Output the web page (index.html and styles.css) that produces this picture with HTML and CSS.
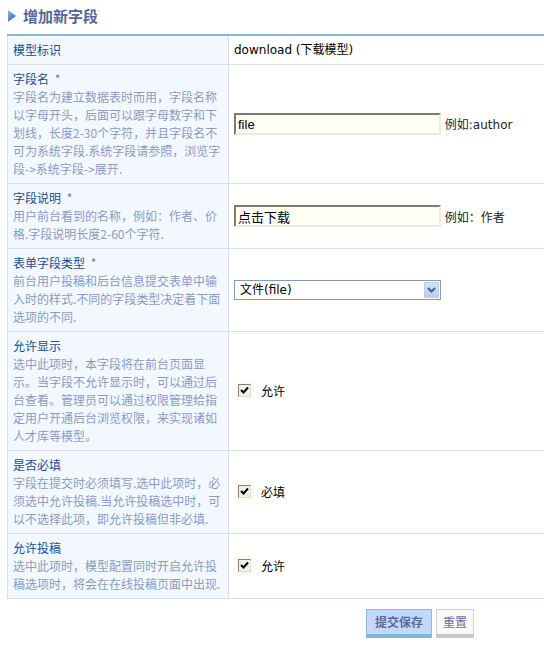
FILE: index.html
```html
<!DOCTYPE html>
<html lang="zh-CN">
<head>
<meta charset="utf-8">
<title>增加新字段</title>
<link rel="stylesheet" href="styles.css">
</head>
<body>
<div class="title">
  <svg class="tri" width="8" height="12" viewBox="0 0 8 12">
    <defs>
      <linearGradient id="tg" x1="0" y1="0" x2="1" y2="1">
        <stop offset="0" stop-color="#8fb6f0"/>
        <stop offset="1" stop-color="#1d58c2"/>
      </linearGradient>
    </defs>
    <polygon points="0,0 8,6 0,12" fill="url(#tg)"/>
  </svg>
  <h2 class="title-text">增加新字段</h2>
</div>

<table class="form">
  <tr>
    <td class="lbl"><span class="name">模型标识</span></td>
    <td class="val">download (下载模型)</td>
  </tr>
  <tr>
    <td class="lbl"><span class="name">字段名</span> <span class="req">*</span>
      <div class="desc">字段名为建立数据表时而用，字段名称以字母开头，后面可以跟字母数字和下划线，长度2-30个字符，并且字段名不可为系统字段.系统字段请参照，浏览字段-&gt;系统字段-&gt;展开.</div></td>
    <td class="val"><input class="txt" type="text" value="file"> <span class="eg">例如:author</span></td>
  </tr>
  <tr>
    <td class="lbl"><span class="name">字段说明</span> <span class="req">*</span>
      <div class="desc">用户前台看到的名称，例如：作者、价格.字段说明长度2-60个字符.</div></td>
    <td class="val"><input class="txt" type="text" value="点击下载"> <span class="eg">例如：作者</span></td>
  </tr>
  <tr>
    <td class="lbl"><span class="name">表单字段类型</span> <span class="req">*</span>
      <div class="desc">前台用户投稿和后台信息提交表单中输入时的样式.不同的字段类型决定着下面选项的不同.</div></td>
    <td class="val">
      <div class="sel">
        <span class="sel-text">文件(file)</span>
        <span class="sel-btn"><svg width="9" height="6" viewBox="0 0 9 6"><polyline points="1,1 4.5,4.5 8,1" fill="none" stroke="#4d6185" stroke-width="2"/></svg></span>
      </div>
    </td>
  </tr>
  <tr>
    <td class="lbl"><span class="name">允许显示</span>
      <div class="desc">选中此项时，本字段将在前台页面显示。当字段不允许显示时，可以通过后台查看。管理员可以通过权限管理给指定用户开通后台浏览权限，来实现诸如人才库等模型。</div></td>
    <td class="val"><label class="chk"><span class="chk-halo"><span class="chk-box"><svg width="11" height="11" viewBox="0 0 11 11"><polyline points="2,5 4.5,7.5 9,2.5" fill="none" stroke="#000" stroke-width="2"/></svg></span></span><span class="chk-text">允许</span></label></td>
  </tr>
  <tr>
    <td class="lbl"><span class="name">是否必填</span>
      <div class="desc">字段在提交时必须填写.选中此项时，必须选中允许投稿.当允许投稿选中时，可以不选择此项，即允许投稿但非必填.</div></td>
    <td class="val"><label class="chk"><span class="chk-halo"><span class="chk-box"><svg width="11" height="11" viewBox="0 0 11 11"><polyline points="2,5 4.5,7.5 9,2.5" fill="none" stroke="#000" stroke-width="2"/></svg></span></span><span class="chk-text">必填</span></label></td>
  </tr>
  <tr>
    <td class="lbl"><span class="name">允许投稿</span>
      <div class="desc">选中此项时，模型配置同时开启允许投稿选项时，将会在在线投稿页面中出现.</div></td>
    <td class="val"><label class="chk"><span class="chk-halo"><span class="chk-box"><svg width="11" height="11" viewBox="0 0 11 11"><polyline points="2,5 4.5,7.5 9,2.5" fill="none" stroke="#000" stroke-width="2"/></svg></span></span><span class="chk-text">允许</span></label></td>
  </tr>
</table>

<div class="actions">
  <button class="btn btn-primary" type="button">提交保存</button>
  <button class="btn btn-reset" type="button">重置</button>
</div>
</body>
</html>
```

FILE: styles.css
```css
html, body {
  margin: 0;
  padding: 0;
  overflow: hidden;
  background: #fff;
}
body {
  font-family: "DejaVu Sans", "Noto Sans CJK SC", sans-serif;
  font-size: 12px;
  color: #000;
  width: 544px;
}
.title {
  display: flex;
  align-items: center;
  height: 32px;
  padding-left: 8px;
  margin-bottom: 2px;
}
.tri {
  display: block;
  margin-right: 7px;
  margin-top: -1px;
}
.title-text {
  margin: 0;
  font-family: "Noto Sans CJK SC", sans-serif;
  font-size: 15px;
  font-weight: bold;
  color: #56659a;
  line-height: 18px;
}
.form {
  margin-left: 7px;
  width: 537px;
  border-collapse: collapse;
  border-top: 2px solid #88b8d3;
}
.form td {
  border: 1px solid #d6deea;
  padding: 5px 5px;
  line-height: 18px;
  vertical-align: middle;
}
.form td.val {
  border-right: 0;
}
.form tr:first-child td {
  border-top: 0;
}
.lbl {
  width: 210px;
  background: #f3f8ff;
  font-family: "Noto Sans CJK SC", sans-serif;
}
.name {
  color: #1a4d8f;
}
.req {
  color: #6d7cb0;
  margin-left: 3px;
}
.desc {
  color: #8b9bc2;
}
.val {
  color: #000;
}
.txt {
  box-sizing: border-box;
  width: 207px;
  height: 22px;
  margin: 0;
  padding: 0 2px;
  border: 2px solid;
  border-color: #7d7d6e #ecebe2 #ecebe2 #7d7d6e;
  background: #fffff4;
  font-family: "Liberation Sans", "Noto Sans CJK SC", sans-serif;
  font-size: 13px;
  color: #000;
  vertical-align: baseline;
}
.eg {
  font-family: "DejaVu Sans", "Noto Sans CJK SC", sans-serif;
  color: #222;
}
.sel {
  box-sizing: border-box;
  width: 207px;
  height: 20px;
  border: 1px solid #7f9db9;
  background: #fff;
  display: flex;
  align-items: center;
  justify-content: space-between;
  padding: 0 1px 0 5px;
}
.sel-text {
  font-family: "DejaVu Sans", "Noto Sans CJK SC", sans-serif;
  font-size: 12px;
  color: #000;
}
.sel-btn {
  box-sizing: border-box;
  width: 15px;
  height: 16px;
  border: 1px solid #b9cbf3;
  border-radius: 1px;
  background: linear-gradient(#d3e0fd, #b6cbf8);
  display: flex;
  align-items: center;
  justify-content: center;
}
.chk {
  display: inline-flex;
  align-items: center;
  margin-left: 1px;
}
.chk-halo {
  display: inline-block;
  padding: 3px;
  background: #fbfbf0;
}
.chk-box {
  box-sizing: border-box;
  display: flex;
  align-items: center;
  justify-content: center;
  width: 13px;
  height: 13px;
  border: 1px solid;
  border-color: #808080 #dcdcd4 #dcdcd4 #808080;
  background: #f1f1ea;
}
.chk-text {
  margin-left: 7px;
  font-family: "Noto Sans CJK SC", sans-serif;
}
.actions {
  display: flex;
  gap: 4px;
  padding-left: 366px;
  margin-top: 10px;
}
.btn {
  box-sizing: border-box;
  height: 29px;
  margin: 0;
  padding: 0 6px;
  font-family: "Noto Sans CJK SC", sans-serif;
  font-size: 12px;
  line-height: 18px;
  cursor: pointer;
}
.btn-primary {
  width: 66px;
  background: #c4d8fd;
  border: 1px solid #8cbad8;
  border-bottom: 4px solid #86b5d1;
  color: #5b6a9c;
  font-weight: bold;
}
.btn-reset {
  width: 38px;
  background: #fafafa;
  border: 1px solid #d0d0d0;
  border-bottom: 4px solid #c8c8c8;
  color: #6670a4;
}
```
